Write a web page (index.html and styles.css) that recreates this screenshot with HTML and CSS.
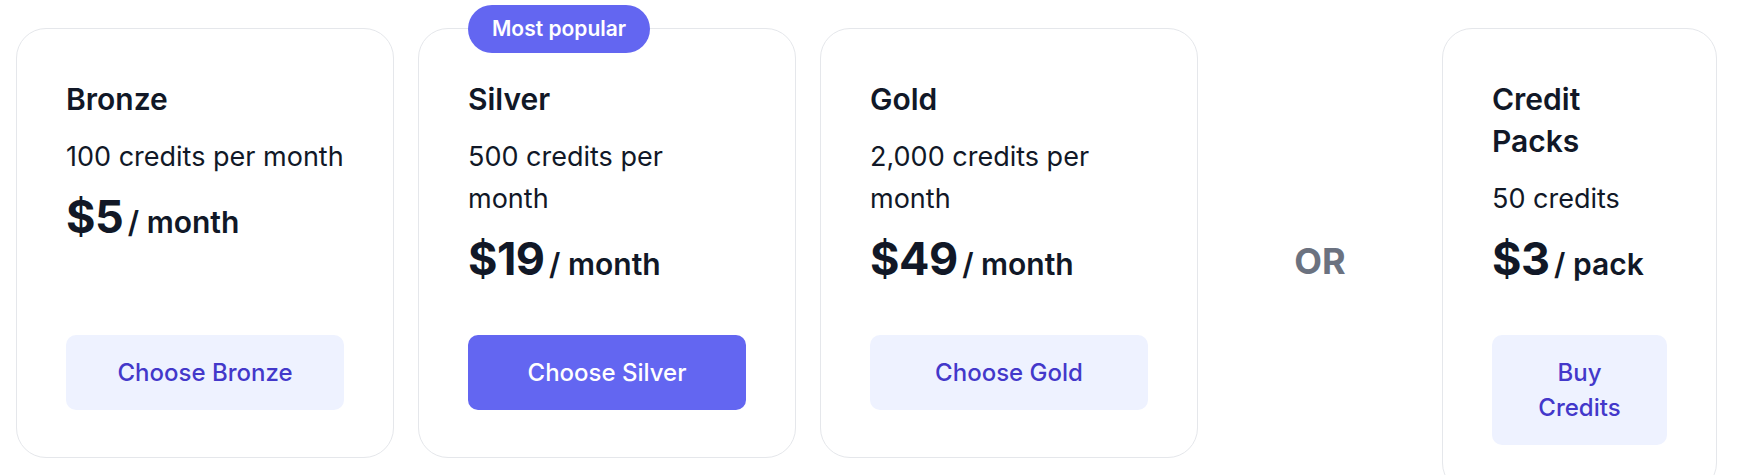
FILE: index.html
```html
<!DOCTYPE html>
<html lang="en">
<head>
  <meta charset="UTF-8">
  <meta name="viewport" content="width=device-width, initial-scale=1.0">
  <title>Pricing</title>
  <link rel="stylesheet" href="styles.css">
</head>
<body>
  <div class="plans">
    <!-- monthly tiers -->
    <div class="tiers">
      <div class="plan-card">
        <div class="plan-body">
          <h3 class="plan-name">Bronze</h3>
          <p class="plan-desc">100 credits per month</p>
          <p class="plan-price"><span class="amount">$5</span> <span class="unit">/ month</span></p>
        </div>
        <a class="plan-btn" href="#">Choose Bronze</a>
      </div>

      <div class="plan-card featured">
        <span class="badge">Most popular</span>
        <div class="plan-body">
          <h3 class="plan-name">Silver</h3>
          <p class="plan-desc">500 credits per month</p>
          <p class="plan-price"><span class="amount">$19</span> <span class="unit">/ month</span></p>
        </div>
        <a class="plan-btn primary" href="#">Choose Silver</a>
      </div>

      <div class="plan-card">
        <div class="plan-body">
          <h3 class="plan-name">Gold</h3>
          <p class="plan-desc">2,000 credits per month</p>
          <p class="plan-price"><span class="amount">$49</span> <span class="unit">/ month</span></p>
        </div>
        <a class="plan-btn" href="#">Choose Gold</a>
      </div>
    </div>

    <div class="or">OR</div>

    <!-- one-off packs -->
    <div class="plan-card pack">
      <div class="plan-body">
        <h3 class="plan-name">Credit Packs</h3>
        <p class="plan-desc">50 credits</p>
        <p class="plan-price"><span class="amount">$3</span> <span class="unit">/ pack</span></p>
      </div>
      <a class="plan-btn" href="#">Buy Credits</a>
    </div>
  </div>
</body>
</html>
```

FILE: styles.css
```css
body {
  font-family: Inter, "Noto Sans", Arial, sans-serif;
  color: #111827;
  background-color: #fff;
  margin: 0;
  padding: 28px 22px 0 16px;
}
.plans {
  display: flex;
  align-items: stretch;
}
.tiers {
  display: grid;
  grid-template-columns: repeat(3, 378px);
  gap: 24px;
  align-self: flex-start;
}
.plan-card {
  position: relative;
  display: flex;
  flex-direction: column;
  background-color: #fff;
  border: 1px solid #e5e7eb;
  border-radius: 30px;
  padding: 49px 49px 47px;
  box-sizing: border-box;
}
.plan-body {
  flex: 1;
}
.plan-name {
  font-size: 30px;
  line-height: 42px;
  font-weight: 600;
  margin: 0;
}
.plan-desc {
  font-size: 27px;
  line-height: 42px;
  margin: 16px 0 0;
}
.plan-price {
  margin: 14px 0 0;
  line-height: 50px;
}
.plan-price .amount {
  font-size: 45px;
  font-weight: 700;
  letter-spacing: -0.5px;
}
.plan-price .unit {
  font-size: 30px;
  font-weight: 600;
}
.plan-btn {
  display: block;
  margin-top: 41px;
  padding: 20px 40px;
  border-radius: 10px;
  background-color: #eef2ff;
  color: #4338ca;
  font-size: 24px;
  line-height: 35px;
  font-weight: 500;
  text-align: center;
  text-decoration: none;
}
.plan-btn.primary {
  background-color: #6366f1;
  color: #fff;
}
.badge {
  position: absolute;
  top: 0;
  left: 49px;
  transform: translateY(-50%);
  background-color: #6366f1;
  color: #fff;
  font-size: 21px;
  line-height: 28px;
  font-weight: 600;
  padding: 10px 24px;
  border-radius: 999px;
  white-space: nowrap;
}
.or {
  width: 244px;
  display: flex;
  align-items: center;
  justify-content: center;
  font-size: 36px;
  font-weight: 700;
  color: #6b7280;
}
.pack {
  width: 275px;
  align-self: flex-start;
}
```
